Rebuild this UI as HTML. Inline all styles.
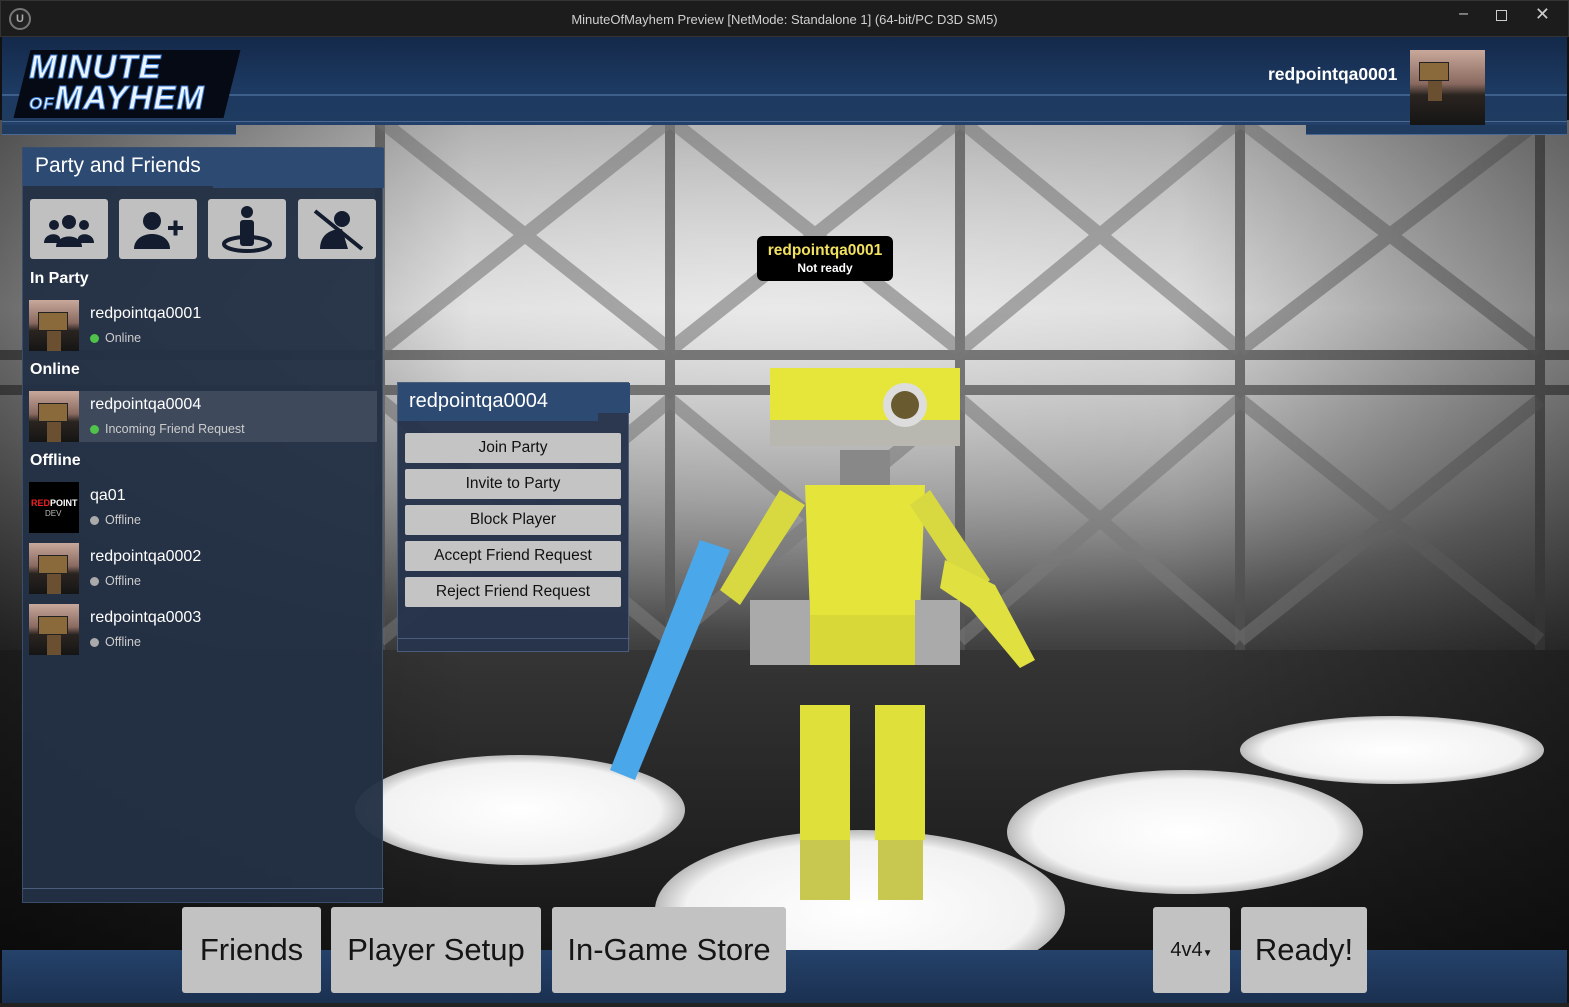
<!DOCTYPE html>
<html><head><meta charset="utf-8">
<style>
*{margin:0;padding:0;box-sizing:border-box}
body{width:1569px;height:1007px;overflow:hidden;background:#111;font-family:"Liberation Sans",sans-serif;position:relative}
.abs{position:absolute}
.title{left:0;top:0;width:1569px;height:37px;background:#1c1c1c;border:1px solid #333}
.title .t{position:absolute;left:0;right:0;top:11px;text-align:center;color:#d0d0d0;font-size:13px}
.hdr{left:2px;top:37px;width:1565px;height:88px;background:linear-gradient(#14294a,#1d3a62 60%,#1f3b60)}
.btm{left:2px;top:950px;width:1565px;height:54px;background:linear-gradient(#25426a,#1a3050)}
.btn{position:absolute;background:#c2c2c2;border-radius:3px;color:#151515;text-align:center}
.panel{left:22px;top:147px;width:361px;height:756px;background:rgba(35,48,68,0.96);border:1px solid #3a4d6b}
.ph{left:0;top:0;width:361px;height:38px;background:#2d4a72}
.ib{position:absolute;top:51px;width:78px;height:60px;background:#c0c0c0;border-radius:3px}
.sec{position:absolute;left:7px;color:#fff;font-weight:bold;font-size:16px}
.row{position:absolute;left:6px;width:348px;height:51px}
.av{position:absolute;left:0;top:0;width:50px;height:51px;background:linear-gradient(#c8a89a,#8a6a60 45%,#2a2420 60%,#151515);overflow:hidden}
.av:before{content:"";position:absolute;left:9px;top:12px;width:28px;height:17px;background:#8a6a3a;border:1px solid #222}
.av:after{content:"";position:absolute;left:18px;top:31px;width:14px;height:20px;background:#6a5030}
.av.rp:before,.av.rp:after{display:none}
.nm{position:absolute;left:61px;top:5px;color:#fff;font-size:16px}
.st{position:absolute;left:61px;top:31px;color:#ccc;font-size:12.5px;padding-left:15px}
.st:before{content:"";position:absolute;left:0;top:3px;width:9px;height:9px;border-radius:50%;background:var(--c)}
.pop{left:397px;top:382px;width:232px;height:270px;background:rgba(38,52,75,0.97);border:1px solid #4a5d7a}
.pb{position:absolute;left:7px;width:216px;height:30px;background:#c4c4c4;border-radius:2px;text-align:center;font-size:15.5px;line-height:30px;color:#111}
</style></head><body>
<svg class="abs" style="left:0;top:120px" width="1569" height="840">
<defs>
<linearGradient id="wall" x1="0" y1="0" x2="0" y2="1"><stop offset="0" stop-color="#a0a0a0"/><stop offset=".35" stop-color="#d4d4d4"/><stop offset=".7" stop-color="#8a8a8a"/><stop offset="1" stop-color="#3a3a3a"/></linearGradient>
<linearGradient id="side" x1="0" y1="0" x2="1" y2="0"><stop offset="0" stop-color="#000" stop-opacity=".5"/><stop offset=".3" stop-color="#000" stop-opacity="0"/><stop offset=".75" stop-color="#000" stop-opacity="0"/><stop offset="1" stop-color="#000" stop-opacity=".4"/></linearGradient>
<radialGradient id="lit" cx=".5" cy=".35" r=".6"><stop offset="0" stop-color="#fff" stop-opacity=".5"/><stop offset="1" stop-color="#fff" stop-opacity="0"/></radialGradient>
<linearGradient id="floor" x1="0" y1="0" x2="0" y2="1"><stop offset="0" stop-color="#353535"/><stop offset="1" stop-color="#151515"/></linearGradient>
<radialGradient id="disc" cx=".5" cy=".5" r=".5"><stop offset="0" stop-color="#fff"/><stop offset=".85" stop-color="#f2f2f2"/><stop offset="1" stop-color="#bbb"/></radialGradient>
</defs>
<rect width="1569" height="540" fill="url(#wall)"/>
<rect width="1569" height="540" fill="url(#lit)"/>
<g stroke="#555" stroke-width="10" opacity=".75">
<line x1="380" y1="0" x2="380" y2="540"/><line x1="670" y1="0" x2="670" y2="540"/><line x1="960" y1="0" x2="960" y2="540"/><line x1="1240" y1="0" x2="1240" y2="540"/><line x1="1540" y1="0" x2="1540" y2="540"/>
<line x1="0" y1="235" x2="1569" y2="235"/><line x1="0" y1="270" x2="1569" y2="270"/>
</g>
<g stroke="#7a7a7a" stroke-width="14" opacity=".6">
<path d="M380 0L670 230M670 0L380 230M670 0L960 230M960 0L670 230M960 0L1240 230M1240 0L960 230M1240 0L1540 230M1540 0L1240 230M380 280L670 520M670 280L380 520M960 280L1240 520M1240 280L960 520M1240 280L1540 520M1540 280L1240 520M670 280L960 520M960 280L670 520"/>
</g>
<rect y="530" width="1569" height="310" fill="url(#floor)"/>
<rect width="1569" height="840" fill="url(#side)"/>
<ellipse cx="520" cy="690" rx="165" ry="55" fill="url(#disc)"/>
<ellipse cx="860" cy="790" rx="205" ry="80" fill="url(#disc)"/>
<ellipse cx="1185" cy="712" rx="178" ry="62" fill="url(#disc)"/>
<ellipse cx="1392" cy="630" rx="152" ry="34" fill="url(#disc)"/>
<g>
<rect x="770" y="248" width="190" height="78" fill="#e6e63a"/>
<rect x="770" y="300" width="190" height="26" fill="#b8b8b0"/>
<circle cx="905" cy="285" r="22" fill="#ddd"/><circle cx="905" cy="285" r="14" fill="#6a5a30"/>
<rect x="840" y="330" width="50" height="35" fill="#888"/>
<path d="M805 365h120l-5 130h-110z" fill="#e4e43a"/>
<rect x="750" y="480" width="60" height="65" fill="#aaa"/><rect x="915" y="480" width="45" height="65" fill="#aaa"/>
<rect x="810" y="495" width="105" height="50" fill="#d8d838"/>
<rect x="800" y="585" width="50" height="135" fill="#e0e03a"/><rect x="875" y="585" width="50" height="135" fill="#e0e03a"/>
<rect x="800" y="720" width="50" height="60" fill="#c8c850"/><rect x="878" y="720" width="45" height="60" fill="#c8c850"/>
<path d="M780 370l-60 100 20 15 65-100z" fill="#d8d840"/>
<path d="M930 370l60 90-20 15-60-90z" fill="#d8d840"/>
<path d="M700 420l-90 230 25 10 95-230z" fill="#4aa8ea"/>
<path d="M945 440l50 25 40 75-15 8-50-60-30-20z" fill="#e0e040"/>
</g>
</svg>
<div class="abs title"><div class="t">MinuteOfMayhem Preview [NetMode: Standalone 1]  (64-bit/PC D3D SM5)</div>
<div class="abs" style="left:8px;top:7px;width:22px;height:22px;border-radius:50%;border:2px solid #777;background:#222;color:#aaa;font-size:11px;text-align:center;line-height:18px;font-weight:bold">U</div>
<div class="abs" style="right:100px;top:4px;color:#ccc;font-size:16px">–</div>
<div class="abs" style="right:61px;top:9px;width:11px;height:11px;border:1px solid #ccc"></div>
<div class="abs" style="right:18px;top:3px;color:#ccc;font-size:18px">✕</div>
</div>
<div class="abs hdr">
<div class="abs" style="left:0;top:57px;width:1565px;height:2px;background:#3e5f8a"></div>
<div class="abs" style="left:0;top:84px;width:1565px;height:4px;background:#23406a;border-top:1px solid #4a6a95"></div>
<div class="abs" style="left:20px;top:13px;width:210px;height:68px;background:#050a14;transform:skewX(-14deg)"></div>
<div class="abs" style="left:27px;top:14px;color:#eaf4ff;font-style:italic;font-weight:900;font-size:33px;letter-spacing:1px;line-height:31px;-webkit-text-stroke:1px #3a7ad0">MINUTE<br><span style="font-size:17px">OF</span>MAYHEM</div>
<div class="abs" style="left:1266px;top:27px;color:#fff;font-weight:bold;font-size:17.5px">redpointqa0001</div>
<div class="abs av" style="left:1408px;top:13px;width:75px;height:75px"></div>
</div>
<div class="abs" style="left:2px;top:125px;width:234px;height:10px;background:#1f3b60;border-bottom:1px solid #4a6a95"></div>
<div class="abs" style="left:1306px;top:125px;width:261px;height:10px;background:#1f3b60;border-bottom:1px solid #4a6a95"></div>
<div class="abs btm"></div>
<div class="abs" style="left:0;top:1003px;width:1569px;height:4px;background:#222"></div>
<div class="abs panel">
<div class="abs ph"></div>
<div class="abs" style="left:190px;top:38px;width:171px;height:2px;background:#2d4a72"></div>
<div class="abs" style="left:12px;top:6px;color:#fff;font-size:21px">Party and Friends</div>
<div class="ib" style="left:7px"><svg width="78" height="60"><g fill="#141c30"><circle cx="39" cy="23" r="7"/><circle cx="24" cy="26" r="5"/><circle cx="54" cy="26" r="5"/><path d="M26 48c0-14 26-14 26 0z"/><path d="M14 44c0-10 14-11 16-5v5z"/><path d="M64 44c0-10-14-11-16-5v5z"/></g></svg></div>
<div class="ib" style="left:96px"><svg width="78" height="60"><g fill="#141c30"><circle cx="33" cy="22" r="9"/><path d="M15 50c0-20 36-20 36 0z"/><rect x="49" y="27" width="15" height="4"/><rect x="54.5" y="21.5" width="4" height="15"/></g></svg></div>
<div class="ib" style="left:185px"><svg width="78" height="60"><g fill="#141c30"><circle cx="39" cy="13" r="6"/><rect x="32" y="21" width="14" height="26" rx="3"/></g><ellipse cx="39" cy="45" rx="23" ry="7" fill="none" stroke="#141c30" stroke-width="4"/></svg></div>
<div class="ib" style="left:275px"><svg width="78" height="60"><g fill="#141c30"><circle cx="44" cy="20" r="8"/><path d="M22 50c0-14 10-20 22-20l6 20z"/></g><line x1="17" y1="12" x2="64" y2="50" stroke="#141c30" stroke-width="4"/></svg></div>
<div class="sec" style="top:122px">In Party</div>
<div class="row" style="top:152px"><div class="av"></div><div class="nm">redpointqa0001</div><div class="st" style="--c:#4fc34a">Online</div></div>
<div class="sec" style="top:213px">Online</div>
<div class="row" style="top:243px;background:#3e4a5c"><div class="av"></div><div class="nm">redpointqa0004</div><div class="st" style="--c:#4fc34a">Incoming Friend Request</div></div>
<div class="sec" style="top:304px">Offline</div>
<div class="row" style="top:334px"><div class="av rp" style="background:#000"><span style="position:absolute;left:2px;top:16px;font-size:9px;color:#e22;font-weight:bold">RED<span style="color:#fff">POINT</span></span><span style="position:absolute;left:16px;top:27px;font-size:8px;color:#bbb">DEV</span></div><div class="nm">qa01</div><div class="st" style="--c:#aaa">Offline</div></div>
<div class="row" style="top:395px"><div class="av"></div><div class="nm">redpointqa0002</div><div class="st" style="--c:#aaa">Offline</div></div>
<div class="row" style="top:456px"><div class="av"></div><div class="nm">redpointqa0003</div><div class="st" style="--c:#aaa">Offline</div></div>
<div class="abs" style="left:0;top:740px;width:361px;height:16px;border-top:1px solid #4a5d7a"></div>
</div>
<div class="abs pop">
<div class="abs" style="left:0;top:0;width:232px;height:30px;background:#2d4a72"></div>
<div class="abs" style="left:0;top:30px;width:200px;height:8px;background:#2d4a72"></div>
<div class="abs" style="left:11px;top:7px;color:#fff;font-size:20px">redpointqa0004</div>
<div class="pb" style="top:50px">Join Party</div>
<div class="pb" style="top:86px">Invite to Party</div>
<div class="pb" style="top:122px">Block Player</div>
<div class="pb" style="top:158px">Accept Friend Request</div>
<div class="pb" style="top:194px">Reject Friend Request</div>
<div class="abs" style="left:0;top:255px;width:232px;height:1px;background:#4a5d7a"></div>
</div>
<div class="abs" style="left:757px;top:236px;width:136px;height:45px;background:#000;border-radius:6px;text-align:center">
<div style="color:#f2e060;font-weight:bold;font-size:15.5px;margin-top:6px">redpointqa0001</div>
<div style="color:#fff;font-size:12px;font-weight:bold;margin-top:1px">Not ready</div></div>
<div class="btn" style="left:182px;top:907px;width:139px;height:86px;font-size:31px;line-height:86px">Friends</div>
<div class="btn" style="left:331px;top:907px;width:210px;height:86px;font-size:31px;line-height:86px">Player Setup</div>
<div class="btn" style="left:552px;top:907px;width:234px;height:86px;font-size:31px;line-height:86px">In-Game Store</div>
<div class="btn" style="left:1153px;top:907px;width:77px;height:86px;font-size:20px;line-height:86px">4v4<span style="font-size:10px">▼</span></div>
<div class="btn" style="left:1241px;top:907px;width:126px;height:86px;font-size:31px;line-height:86px">Ready!</div>
</body></html>
